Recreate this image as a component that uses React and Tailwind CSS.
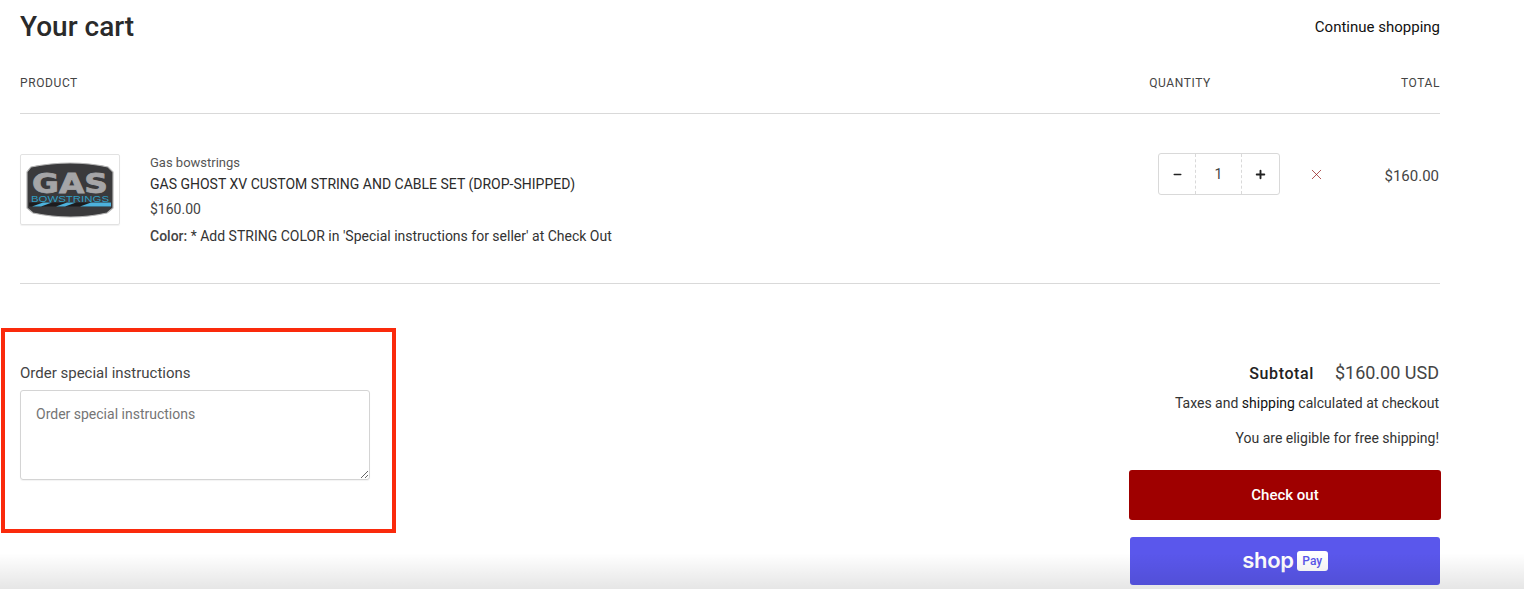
import { Minus, Plus, X } from "lucide-react";

function GasLogo() {
  return (
    <svg viewBox="0 0 98 69" className="w-full h-full">
      <path d="M10 12 Q50 4 87 12 L92 17 L92 53 L86 58 Q50 66 12 58 L6 53 L6 17 Z" fill="#3a3a3c" stroke="#b4b4b4" strokeWidth="1.200" />
      <text x="49" y="38" textAnchor="middle" fontFamily="'DejaVu Sans', sans-serif" fontWeight="700" fontSize="27" fill="#a5a5a7" stroke="#a5a5a7" strokeWidth="0.800" textLength="76" lengthAdjust="spacingAndGlyphs">GAS</text>
      <text x="49" y="46.500" textAnchor="middle" fontFamily="'Liberation Sans', sans-serif" fontSize="8.500" fill="#2f9fc4" textLength="78" lengthAdjust="spacingAndGlyphs">BOWSTRINGS</text>
      <path d="M8 47.500 H90 V51.500 H8 Z" fill="#1c1c1e" />
      <path d="M11 51.500 L22 47.500 H31 L20 51.500 Z M35 51.500 L46 47.500 H55 L44 51.500 Z M59 51.500 L70 47.500 H90 V51.500 Z" fill="#4db2dc" />
    </svg>
  );
}

export default function App() {
  return (
    <div className="relative h-[589px] overflow-hidden bg-white font-['Roboto',sans-serif] text-[#3d3d3d]">
      <div className="w-[1420px] ml-5">
        <div className="flex items-center justify-between h-[26px] mt-[14px]">
          <h1 className="text-[28px] font-medium text-[#2a2a2a]">Your cart</h1>
          <a className="text-[15px] text-[#111]">Continue shopping</a>
        </div>

        <div className="flex items-center h-[20px] mt-[33px] text-[12px] tracking-[0.6px] text-[#444]">
          <div className="flex-1">PRODUCT</div>
          <div className="w-[62px] text-center mr-[229px]">QUANTITY</div>
          <div className="absolute right-[84px]">TOTAL</div>
        </div>

        <div className="h-px bg-[#d9d9d9] mt-[20px]" />

        <div className="flex h-[170px] pt-10 border-b border-[#d9d9d9]">
          <div className="w-[100px] h-[71px] border border-[#e2e2e2] rounded-[2px] shadow-[0_1px_1px_rgba(0,0,0,0.06)]">
            <GasLogo />
          </div>
          <div className="ml-[30px] flex-1 pt-[1px]">
            <div className="text-[13px] leading-[16px] text-[#555]">Gas bowstrings</div>
            <div className="text-[14px] leading-[18px] mt-[4px] text-[#2b2b2b]">GAS GHOST XV CUSTOM STRING AND CABLE SET (DROP-SHIPPED)</div>
            <div className="text-[14px] leading-[18px] mt-[7px] text-[#444]">$160.00</div>
            <div className="text-[14px] leading-[18px] mt-[9px] text-[#333]">
              <span className="font-medium text-[#444]">Color:</span> * Add STRING COLOR in 'Special instructions for seller' at Check Out
            </div>
          </div>
          <div className="flex items-start w-[282px] -mt-px">
            <div className="flex items-center h-[42px] w-[122px] border border-[#d9d9d9] rounded-[3px]">
              <div className="w-[37px] h-full flex items-center justify-center border-r border-dashed border-[#d9d9d9]">
                <Minus size={11} strokeWidth={3.500} className="text-[#222]" />
              </div>
              <div className="w-[45px] text-center text-[14px] text-[#444]">1</div>
              <div className="flex-1 h-full flex items-center justify-center border-l border-dashed border-[#d9d9d9]">
                <Plus size={13} strokeWidth={3.500} className="text-[#222]" />
              </div>
            </div>
            <div className="ml-[28px] h-[42px] flex items-center">
              <X size={17} strokeWidth={1} className="text-[#8f1010]" />
            </div>
            <div className="flex-1 text-right text-[15px] leading-[46px] text-[#444] pr-px">$160.00</div>
          </div>
        </div>

        <div className="flex justify-between mt-[80px]">
          <div className="w-[350px]">
            <label className="block text-[15px] leading-[18px] text-[#444]">Order special instructions</label>
            <textarea
              placeholder="Order special instructions"
              className="block w-full h-[90px] mt-2 px-[15px] py-[14px] text-[14px] leading-[19px] border border-[#d4d4d4] rounded-[3px] shadow-[0_1px_1px_rgba(0,0,0,0.05)] placeholder:text-[#757575]"
            />
          </div>
          <div className="w-[312px] -mt-[2px] -mr-px flex flex-col items-end">
            <div className="flex items-baseline h-[22px] -mt-[3px] mr-[2px]">
              <span className="text-[16px] font-medium tracking-[0.6px] text-[#222]">Subtotal</span>
              <span className="text-[18px] ml-[21px] text-[#444]">$160.00 USD</span>
            </div>
            <div className="text-[14px] leading-[18px] mt-[13px] mr-[2px] text-[#333]">
              Taxes and <span className="text-[#111]">shipping</span> calculated at checkout
            </div>
            <div className="text-[14px] leading-[18px] mt-[17px] mr-[2px] text-[#333]">You are eligible for free shipping!</div>
            <button className="w-full h-[50px] mt-[23px] bg-[#9f0000] rounded-[3px] text-white text-[15px] font-medium">Check out</button>
            <div className="w-[310px] h-[48px] mt-[17px] mr-px bg-[#5a57ec] rounded-[3px] flex items-center justify-center">
              <span className="font-['Inter',sans-serif] text-[22px] leading-none font-semibold text-white tracking-[-0.3px] -mt-[3px]">shop</span>
              <span className="ml-[3px] w-[31px] h-[20px] bg-white rounded-[3px] flex items-center justify-center text-[12px] font-medium text-[#5a57ec]">Pay</span>
            </div>
          </div>
        </div>
      </div>

      {/* annotation box */}
      <div className="absolute left-[1px] top-[328px] w-[395px] h-[205px] border-[4px] border-[#fa2a0c]" />
      {/* fade along the bottom */}
      <div className="absolute left-0 right-0 bottom-0 h-[36px] bg-gradient-to-b from-transparent to-black/10 pointer-events-none" />
    </div>
  );
}
